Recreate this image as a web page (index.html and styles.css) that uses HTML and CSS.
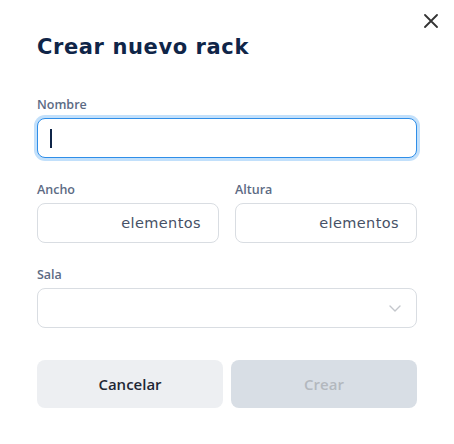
FILE: index.html
```html
<!DOCTYPE html>
<html lang="es">
<head>
<meta charset="utf-8">
<title>Crear nuevo rack</title>
<link rel="stylesheet" href="styles.css">
</head>
<body>
<div class="dialog">
  <button class="close" aria-label="Cerrar">
    <svg width="14" height="14" viewBox="0 0 14 14"><path d="M1 1 L13 13 M13 1 L1 13" stroke="#333" stroke-width="1.8" stroke-linecap="round" fill="none"/></svg>
  </button>
  <h1 class="title">Crear nuevo rack</h1>
  <div class="field first">
    <label class="label">Nombre</label>
    <div class="input focus"><span class="caret"></span></div>
  </div>
  <div class="row">
    <div class="field">
      <label class="label">Ancho</label>
      <div class="input suffix"><span class="unit">elementos</span></div>
    </div>
    <div class="field">
      <label class="label">Altura</label>
      <div class="input suffix"><span class="unit">elementos</span></div>
    </div>
  </div>
  <div class="field">
    <label class="label">Sala</label>
    <div class="input select">
      <svg width="12" height="7" viewBox="0 0 12 7"><path d="M1 1 L6 6 L11 1" stroke="#c4c7cc" stroke-width="1.4" fill="none" stroke-linecap="round" stroke-linejoin="round"/></svg>
    </div>
  </div>
  <div class="actions">
    <button class="btn cancel">Cancelar</button>
    <button class="btn create" disabled>Crear</button>
  </div>
</div>
</body>
</html>
```
FILE: styles.css
```css
* { box-sizing: border-box; }
html, body { margin: 0; padding: 0; background: #fff; }
body { font-family: "DejaVu Sans", "Open Sans", sans-serif; }
.dialog {
  position: relative;
  width: 454px;
  height: 444px;
  padding: 31px 37px 0 37px;
}
.close {
  position: absolute;
  top: 13px;
  right: 15px;
  width: 16px;
  height: 16px;
  padding: 1px;
  border: 0;
  background: none;
  display: flex;
}
.title {
  margin: 0;
  font-size: 21px;
  font-weight: 700;
  line-height: 32px;
  color: #0f2548;
  letter-spacing: 0.6px;
}
.field { margin-top: 24px; flex: 1; min-width: 0; }
.field.first { margin-top: 34px; }
.label {
  display: block;
  font-family: "Open Sans", sans-serif;
  font-size: 12.5px;
  font-weight: 600;
  line-height: 16px;
  color: #5c6b84;
  margin-bottom: 5px;
}
.input {
  height: 40px;
  border: 1px solid #d9dde2;
  border-radius: 8px;
  display: flex;
  align-items: center;
  padding: 0 16px;
  background: #fff;
}
.input.focus {
  border-color: #2f8ee8;
  box-shadow: 0 0 0 3px #c2e0fb;
  padding: 0 12px;
}
.caret { width: 1.5px; height: 19px; background: #0f2548; }
.input.suffix { justify-content: flex-end; padding-right: 17px; }
.unit {
  font-size: 14.5px;
  color: #465166;
  letter-spacing: 0.4px;
}
.input.select { justify-content: flex-end; padding-right: 15px; }
.row { display: flex; gap: 16px; }
.actions { display: flex; gap: 8px; margin-top: 32px; }
.btn {
  flex: 1;
  height: 48px;
  border: 0;
  border-radius: 8px;
  font-family: "Open Sans", sans-serif;
  font-size: 15px;
  font-weight: 600;
}
.cancel { background: #edeff2; color: #1f2735; }
.create { background: #d8dee5; color: #b3b8be; }
```
